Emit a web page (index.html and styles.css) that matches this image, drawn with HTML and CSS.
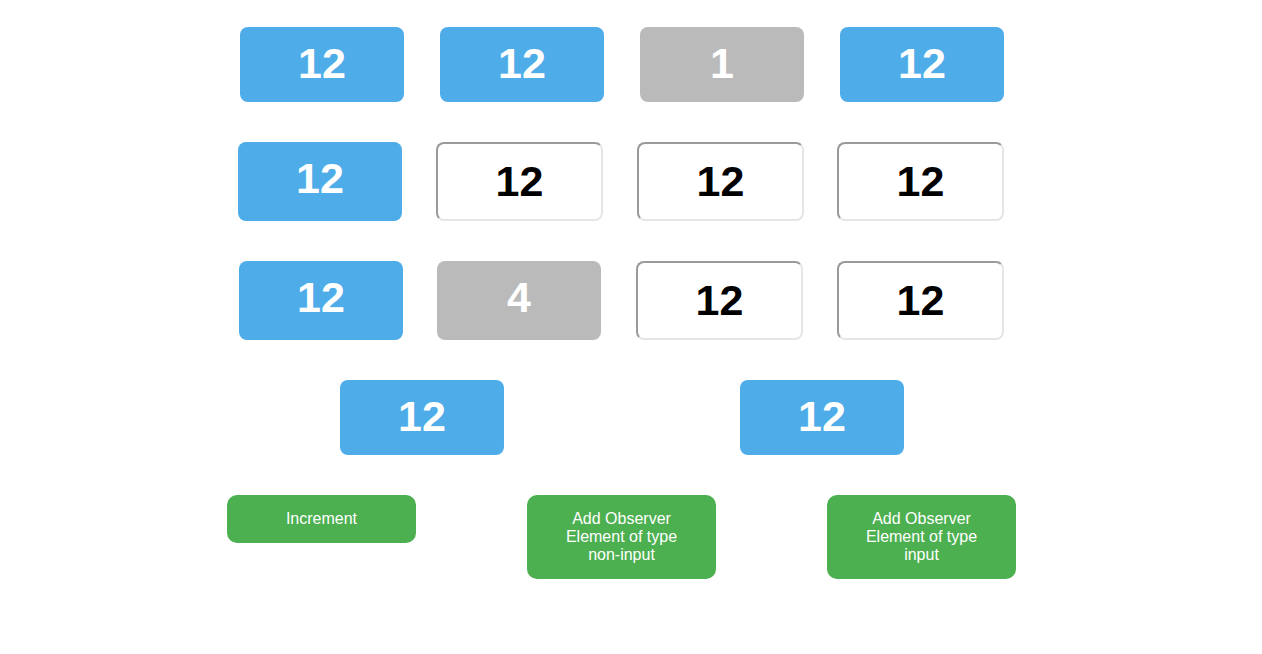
FILE: index.html
```html
<!DOCTYPE html>
<html>
<head>
<meta charset="utf-8">
<link rel="stylesheet" href="styles.css">
</head>
<body>
<div class="board">
  <div class="row row-4">
    <div class="tile tile-blue">12</div>
    <div class="tile tile-blue">12</div>
    <div class="tile tile-gray">1</div>
    <div class="tile tile-blue">12</div>
  </div>
  <div class="row row-4">
    <div class="tile tile-blue tile-tall shift-2">12</div>
    <input class="field shift-1" type="text" value="12">
    <input class="field" type="text" value="12">
    <input class="field" type="text" value="12">
  </div>
  <div class="row row-4">
    <div class="tile tile-blue tile-tall shift-1">12</div>
    <div class="tile tile-gray tile-tall shift-3">4</div>
    <input class="field shift-1" type="text" value="12">
    <input class="field" type="text" value="12">
  </div>
  <div class="row row-2">
    <div class="tile tile-blue">12</div>
    <div class="tile tile-blue">12</div>
  </div>
  <div class="row row-3">
    <button class="action">Increment</button>
    <button class="action">Add Observer Element of type non-input</button>
    <button class="action">Add Observer Element of type input</button>
  </div>
</div>
</body>
</html>
```

FILE: styles.css
```css
html, body {
  margin: 0;
  padding: 0;
  background: #ffffff;
}

body {
  font-family: "Liberation Sans", Arial, sans-serif;
}

.board {
  width: 800px;
  margin-left: 222px;
  padding-top: 27px;
  display: flex;
  flex-direction: column;
  gap: 40px;
}

.row {
  display: grid;
}

.row-4 {
  grid-template-columns: repeat(4, 200px);
  justify-items: end;
}

.row-4 > * {
  margin: 0 18px 0 0;
}

.row-4 > .shift-1 {
  margin-right: 19px;
}

.row-4 > .shift-2 {
  margin-right: 20px;
}

.row-4 > .shift-3 {
  margin-right: 21px;
}

.row-2 {
  grid-template-columns: repeat(2, 400px);
  justify-items: center;
}

.row-3 {
  grid-template-columns: repeat(3, 300px);
  justify-items: start;
  align-items: start;
}

.row-3 > * {
  margin-left: 5px;
}

.tile {
  width: 164px;
  height: 75px;
  border-radius: 8px;
  display: flex;
  align-items: center;
  justify-content: center;
  color: #ffffff;
  font-weight: bold;
  font-size: 43px;
  padding-bottom: 3px;
  box-sizing: border-box;
}

.tile-tall {
  height: 79px;
  padding-bottom: 6px;
}

.tile-blue {
  background: #4eace9;
}

.tile-gray {
  background: #bababa;
}

.field {
  width: 167px;
  height: 79px;
  box-sizing: border-box;
  padding: 0;
  border-width: 2px;
  border-style: solid;
  border-color: #9a9a9a #e6e6e6 #e6e6e6 #9a9a9a;
  border-radius: 8px;
  background: #ffffff;
  color: #000000;
  text-align: center;
  font-family: "Liberation Sans", Arial, sans-serif;
  font-weight: bold;
  font-size: 43px;
  outline: none;
}

.action {
  width: 189px;
  box-sizing: border-box;
  padding: 15px 25px;
  border: none;
  border-radius: 10px;
  background: #4caf50;
  color: #ffffff;
  font-family: "Liberation Sans", Arial, sans-serif;
  font-size: 16px;
  line-height: 18px;
  text-align: center;
}
```
